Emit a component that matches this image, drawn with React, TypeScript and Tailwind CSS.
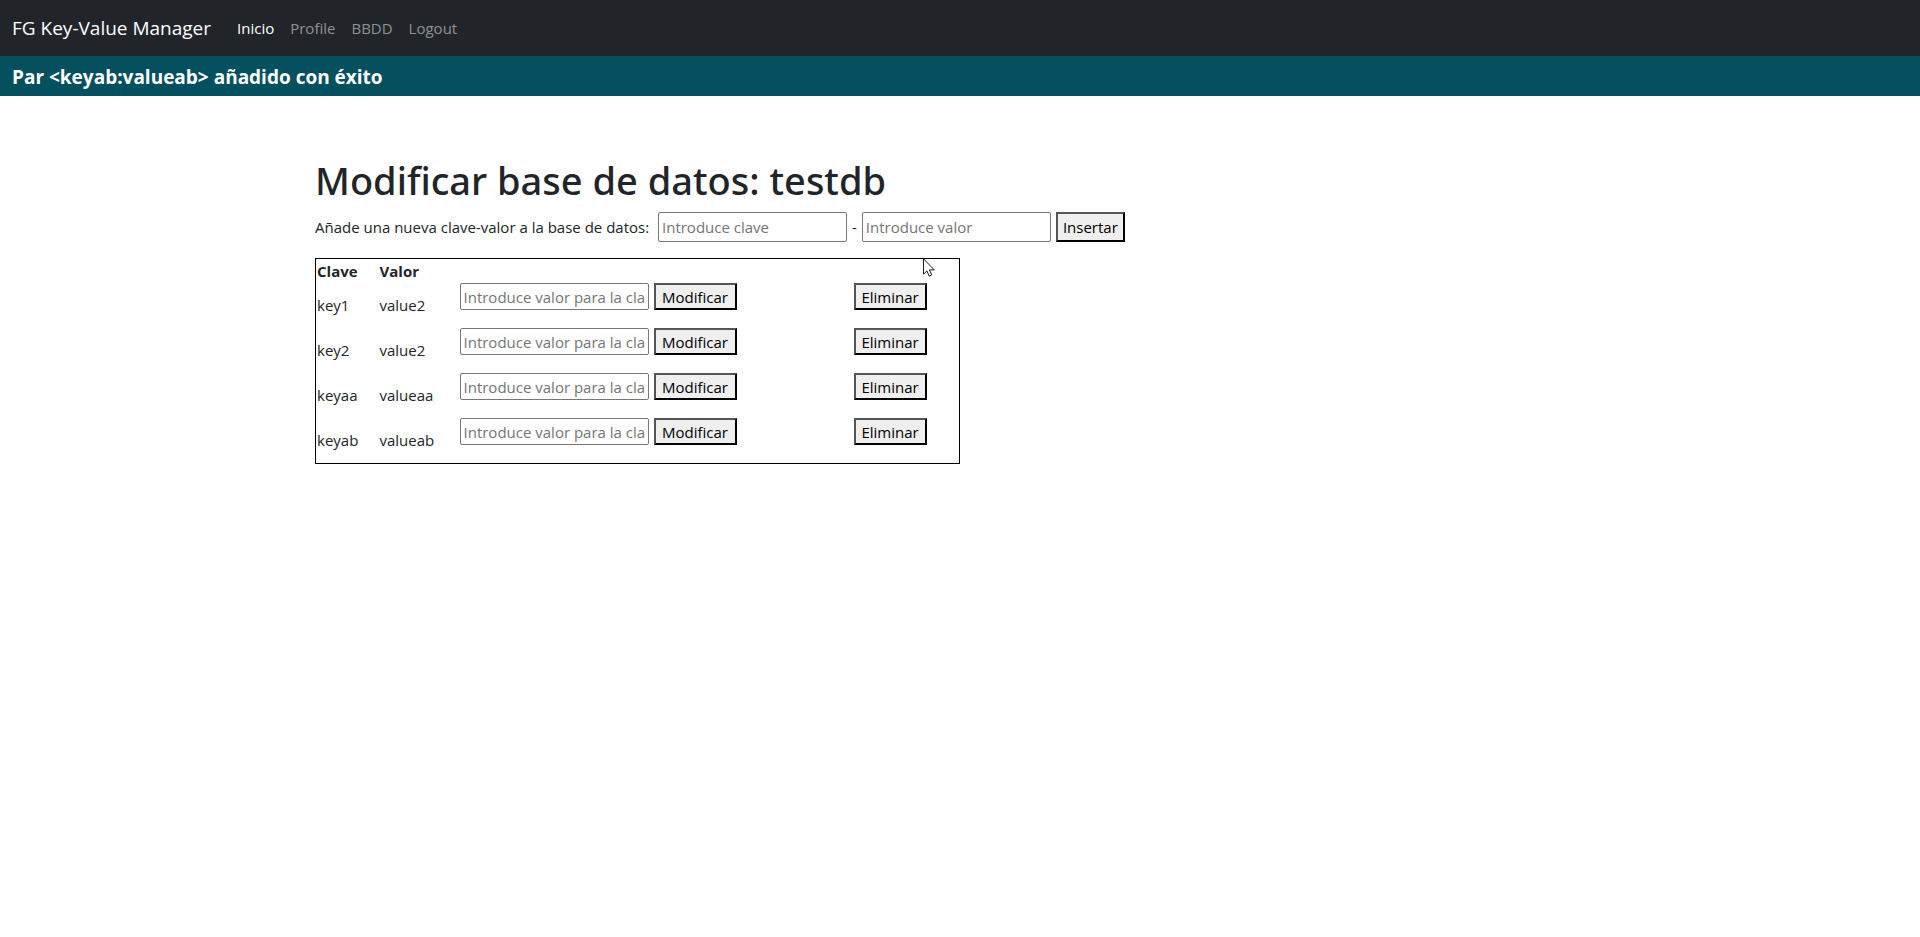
import { useState } from "react";

type Pair = { clave: string; valor: string };

const pairs: Pair[] = [
  { clave: "key1", valor: "value2" },
  { clave: "key2", valor: "value2" },
  { clave: "keyaa", valor: "valueaa" },
  { clave: "keyab", valor: "valueab" },
];

const links = ["Inicio", "Profile", "BBDD", "Logout"];

const inputStyle =
  "w-[189px] rounded-[2px] border border-[#767676] bg-white px-[3px] text-black placeholder:text-[#757575]";
const buttonStyle =
  "border-2 border-t-[#555555] border-l-[#555555] border-r-black border-b-black bg-[#efefef] text-center text-black";

function Navbar() {
  return (
    <nav className="flex h-14 items-center bg-[#212529] px-3">
      <a href="#" className="mr-[26px] text-[19px] text-white">
        FG Key-Value Manager
      </a>
      <ul className="flex gap-4">
        {links.map((link, i) => (
          <li key={link}>
            <a href="#" className={i === 0 ? "text-white" : "text-[#909294]"}>
              {link}
            </a>
          </li>
        ))}
      </ul>
    </nav>
  );
}

function InsertForm() {
  const [clave, setClave] = useState("");
  const [valor, setValor] = useState("");
  return (
    <form
      className="mt-2 flex flex-wrap items-center gap-[5px]"
      onSubmit={(e) => e.preventDefault()}
    >
      <label htmlFor="clave" className="min-w-[338px]">
        Añade una nueva clave-valor a la base de datos:
      </label>
      <input
        id="clave"
        className={`${inputStyle} h-[30px]`}
        placeholder="Introduce clave"
        value={clave}
        onChange={(e) => setClave(e.target.value)}
      />
      <span>-</span>
      <input
        aria-label="Valor"
        className={`${inputStyle} h-[30px]`}
        placeholder="Introduce valor"
        value={valor}
        onChange={(e) => setValor(e.target.value)}
      />
      <button type="submit" className={`${buttonStyle} h-[30px] w-[69px]`}>
        Insertar
      </button>
    </form>
  );
}

function PairRow({ clave, valor }: Pair) {
  return (
    <tr className="h-[45px]">
      <td className="px-px pb-px">{clave}</td>
      <td className="px-px pb-px">{valor}</td>
      <td className="px-px align-top">
        <form className="flex gap-[5px]" onSubmit={(e) => e.preventDefault()}>
          <input
            aria-label={`Valor para la clave ${clave}`}
            className={`${inputStyle} h-[27px]`}
            placeholder={`Introduce valor para la clave ${clave}`}
          />
          <button type="submit" className={`${buttonStyle} h-[27px] w-[83px] leading-5`}>
            Modificar
          </button>
        </form>
      </td>
      <td className="px-px align-top">
        <button type="button" className={`${buttonStyle} block h-[27px] w-[73px] leading-5`}>
          Eliminar
        </button>
      </td>
    </tr>
  );
}

function PointerArrow() {
  return (
    <svg
      className="pointer-events-none absolute top-0 right-[25px] h-[19px] w-3"
      viewBox="0 0 12 19"
      aria-hidden="true"
    >
      <path
        d="M.5 .8v15.4l3.4-3.3 2.3 5.2 2.5-1.1-2.3-5.1h4.9z"
        fill="white"
        stroke="#1a1a2a"
        strokeWidth="1"
      />
    </svg>
  );
}

export default function App() {
  return (
    <div className="min-h-screen bg-white font-['Open_Sans','Noto_Sans',sans-serif] text-[15px] leading-6 text-[#212529]">
      <Navbar />
      <p role="status" className="flex h-10 items-center bg-[#05505f] px-3 pt-0.5 text-[19px] font-bold text-white">
        Par &lt;keyab:valueab&gt; añadido con éxito
      </p>
      <main className="mx-auto max-w-[1290px] pt-15">
        <h1 className="font-['Noto_Sans','Open_Sans',sans-serif] text-[38px] leading-12 font-medium">
          Modificar base de datos: testdb
        </h1>
        <InsertForm />
        <div className="relative mt-4 w-1/2 min-w-[645px]">
          <table className="w-full table-fixed border-collapse border border-black">
            <colgroup>
              <col className="w-[63px]" />
              <col className="w-20" />
              <col />
              <col className="w-[107px]" />
            </colgroup>
            <thead>
              <tr className="h-6 text-left">
                <th className="px-px font-bold">Clave</th>
                <th className="px-px font-bold">Valor</th>
                <th />
                <th />
              </tr>
            </thead>
            <tbody>
              {pairs.map((pair) => (
                <PairRow key={pair.clave} {...pair} />
              ))}
            </tbody>
          </table>
          <PointerArrow />
        </div>
      </main>
    </div>
  );
}
